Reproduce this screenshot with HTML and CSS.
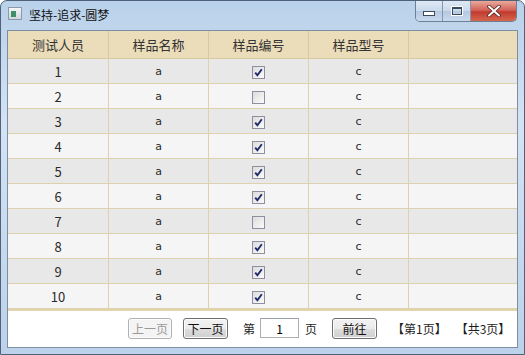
FILE: index.html
```html
<!DOCTYPE html>
<html lang="zh-CN">
<head>
    <meta charset="UTF-8">
    <link rel="stylesheet" href="styles.css">
    <title>坚持-追求-圆梦</title>
</head>
<body>
    <div class="window">
        <div class="titlebar">
            <div class="app-icon"><span class="icon-dot"></span></div>
            <div class="title">坚持-追求-圆梦</div>
            <div class="caption-btns">
                <div class="cap cap-min"><span class="glyph-min"></span></div>
                <div class="cap cap-max"><span class="glyph-max"></span></div>
                <div class="cap cap-close">
                    <svg width="14" height="12" viewBox="0 0 14 12">
                        <path d="M2 1.5 L12 10.5 M12 1.5 L2 10.5" stroke="#5a1f1a" stroke-width="3.6" stroke-linecap="round"/>
                        <path d="M2 1.5 L12 10.5 M12 1.5 L2 10.5" stroke="#fff" stroke-width="2" stroke-linecap="round"/>
                    </svg>
                </div>
            </div>
        </div>
        <div class="client">
            <div class="grid">
                <table>
                    <thead>
                        <tr>
                            <th class="first">测试人员</th>
                            <th>样品名称</th>
                            <th>样品编号</th>
                            <th>样品型号</th>
                            <th class="filler"></th>
                        </tr>
                    </thead>
                    <tbody id="rows"></tbody>
                </table>
            </div>
            <div class="pager">
                <button class="btn btn-prev" disabled>上一页</button>
                <button class="btn btn-next">下一页</button>
                <span class="lbl lbl-di">第</span>
                <input class="page-box" type="text" value="1">
                <span class="lbl lbl-ye">页</span>
                <button class="btn btn-go">前往</button>
                <span class="info info-cur">【第1页】</span>
                <span class="info info-all">【共3页】</span>
            </div>
        </div>
    </div>
    <script>
        var data = [
            [1, true], [2, false], [3, true], [4, true], [5, true],
            [6, true], [7, false], [8, true], [9, true], [10, true]
        ];
        var checkSvg = '<svg width="11" height="11" viewBox="0 0 11 11"><path d="M2.2 5.6 L4.4 8.2 L8.8 2.2" fill="none" stroke="#1f2a6b" stroke-width="1.9"/></svg>';
        var html = '';
        data.forEach(function (row, i) {
            html += '<tr class="' + (i % 2 ? 'even' : 'odd') + '">' +
                '<td class="num">' + row[0] + '</td>' +
                '<td class="letter">a</td>' +
                '<td><span class="check">' + (row[1] ? checkSvg : '') + '</span></td>' +
                '<td class="letter">c</td>' +
                '<td class="filler"></td>' +
                '</tr>';
        });
        document.getElementById('rows').innerHTML = html;
    </script>
</body>
</html>
```

FILE: styles.css
```css
body {
    margin: 0;
    width: 525px;
    height: 355px;
    overflow: hidden;
    background: #fff;
    font-family: "Noto Sans CJK SC", "Noto Sans", sans-serif;
    font-size: 12px;
    color: #1e1e1e;
}

.window {
    box-sizing: border-box;
    height: 355px;
    border: 1px solid #4f6279;
    border-radius: 7px 7px 0 0;
    background: linear-gradient(to bottom, #b9d1ea 0%, #d4e3f4 35%, #c6d9ee 70%, #bcd2ea 100%);
    display: flex;
    flex-direction: column;
    padding: 0 6px 6px;
}

/* title bar */
.titlebar {
    height: 29px;
    display: flex;
    align-items: flex-start;
}

.app-icon {
    width: 14px;
    height: 13px;
    margin: 6px 0 0 1px;
    background: linear-gradient(#f4f6f8, #cfd6de);
    border: 1px solid #8c99a6;
    box-sizing: border-box;
    display: flex;
    align-items: flex-end;
    padding: 0 0 2px 2px;
}

.icon-dot {
    width: 5px;
    height: 6px;
    background: #3f8f6a;
}

.title {
    margin: 5px 0 0 7px;
    font-size: 12px;
    line-height: 17px;
    color: #111;
}

.caption-btns {
    margin-left: auto;
    margin-right: 1px;
    display: flex;
    height: 20px;
    border: 1px solid #6f7f93;
    border-top: none;
    border-radius: 0 0 5px 5px;
    overflow: hidden;
}

.cap {
    display: flex;
    align-items: center;
    justify-content: center;
    height: 100%;
}

.cap-min,
.cap-max {
    width: 27px;
    background: linear-gradient(#dfe9f5, #c9d9ec 50%, #b5c9e1 51%, #c8daef);
    border-right: 1px solid #8796a8;
}

.cap-min {
    width: 26px;
}

.glyph-min {
    width: 10px;
    height: 3px;
    margin-top: 5px;
    background: #fff;
    border: 1px solid #3c4b5c;
}

.glyph-max {
    width: 8px;
    height: 5px;
    background: transparent;
    border: 1px solid #3c4b5c;
    border-top-width: 2px;
    box-shadow: 0 0 0 1px #fff;
}

.cap-close {
    width: 45px;
    background: linear-gradient(#e9a99c, #d2645a 45%, #c23a2f 55%, #d4674e);
}

/* client */
.client {
    flex: 1;
    border: 1px solid #7d8ea3;
    background: #fff;
    display: flex;
    flex-direction: column;
}

.grid {
    border-bottom: 2px solid #e3d4ad;
}

table {
    border-collapse: separate;
    border-spacing: 0;
    width: 509px;
    table-layout: fixed;
}

th {
    height: 27px;
    padding: 0;
    background: #ebdcba;
    border-right: 1px solid #d8c9a2;
    border-bottom: 1px solid #d8c9a2;
    font-weight: normal;
    font-size: 13px;
    color: #333;
    width: 99px;
}

th.first {
    width: 100px;
}

th.filler {
    width: auto;
    border-right: none;
}

td {
    height: 24px;
    padding: 0;
    text-align: center;
    border-right: 1px solid #ddd1ae;
    border-bottom: 1px solid #ddd1ae;
    font-size: 13px;
    color: #2a2a2a;
}

td.filler {
    border-right: none;
}

tr.odd td {
    background: #e8e8e8;
}

tr.even td {
    background: #f5f5f5;
}

td.letter {
    font-family: "DejaVu Sans", sans-serif;
    font-size: 11px;
}

.check {
    display: inline-flex;
    align-items: center;
    justify-content: center;
    width: 13px;
    height: 13px;
    box-sizing: border-box;
    border: 1px solid #8e8f9f;
    background: linear-gradient(135deg, #dcdcdc, #fbfbfb);
    vertical-align: middle;
}

/* pager */
.pager {
    flex: 1;
    display: flex;
    align-items: center;
    padding-bottom: 2px;
}

.btn {
    height: 21px;
    padding: 0;
    font-family: inherit;
    font-size: 12px;
    color: #111;
    border: 1px solid #707070;
    border-radius: 3px;
    background: linear-gradient(#f2f2f2, #ebebeb 50%, #dddddd 51%, #cfcfcf);
    box-shadow: inset 0 0 0 1px #fcfcfc;
}

.btn[disabled] {
    color: #9a9a9a;
    border-color: #adb2b5;
    background: #f4f4f4;
}

.btn-prev {
    width: 44px;
    margin-left: 120px;
}

.btn-next {
    width: 45px;
    margin-left: 11px;
}

.lbl-di {
    margin-left: 15px;
}

.page-box {
    width: 39px;
    height: 20px;
    box-sizing: border-box;
    margin-left: 5px;
    border: 1px solid #abadb3;
    border-top-color: #9aa0a8;
    text-align: center;
    font-family: inherit;
    font-size: 12px;
    padding: 0;
}

.lbl-ye {
    margin-left: 6px;
}

.btn-go {
    width: 45px;
    margin-left: 15px;
}

.info-cur {
    margin-left: 15px;
}

.info-all {
    margin-left: 9px;
}
```
